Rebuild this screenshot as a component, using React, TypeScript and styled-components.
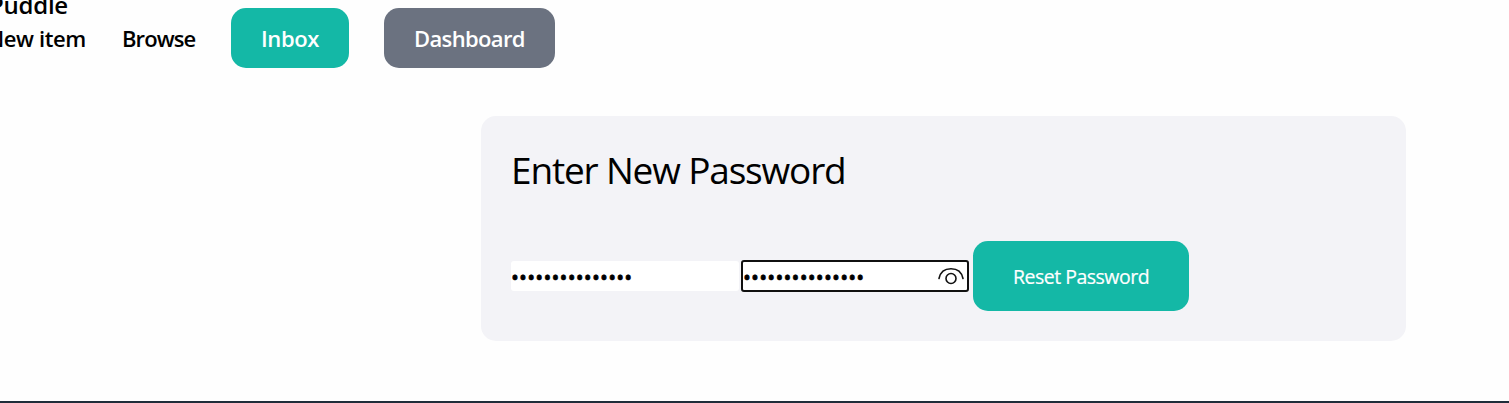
import React from "react";
import styled, { createGlobalStyle } from "styled-components";

const GlobalStyle = createGlobalStyle`
  * { box-sizing: border-box; }
  html, body, #root { margin: 0; height: 100%; }
  body {
    overflow: hidden;
    background: #fefefe;
    color: #000;
    font-family: "Segoe UI", "Open Sans", "Noto Sans", sans-serif;
  }
`;

const Page = styled.div`
  height: 403px;
  display: flex;
  flex-direction: column;
  overflow: hidden;
`;

const Header = styled.header`
  height: 76px;
  flex: none;
  margin-left: -13px;
`;

const Brand = styled.a`
  display: block;
  height: 8px;
  line-height: 30px;
  margin-top: -10px;
  margin-bottom: 10px;
  padding-left: 2px;
  font-size: 24px;
  font-weight: 600;
  letter-spacing: -0.25px;
  white-space: nowrap;
`;

const Nav = styled.nav`
  display: flex;
  align-items: center;
  gap: 35px;
  height: 60px;
  font-size: 22px;
  line-height: 30px;
  white-space: nowrap;
`;

const NavLink = styled.a<{ $width: number; $spacing: number }>`
  width: ${(p) => p.$width}px;
  font-weight: 600;
  letter-spacing: ${(p) => p.$spacing}px;
`;

const NavButton = styled(NavLink)<{ $color: string }>`
  padding: 15px 0 15px 30px;
  border-radius: 15px;
  background: ${(p) => p.$color};
  color: #fff;
`;

const Card = styled.main`
  width: 925px;
  height: 225px;
  flex: none;
  margin: 40px 0 0 481px;
  padding: 30px;
  border-radius: 15px;
  background: #f3f3f7;
`;

const Title = styled.h1`
  margin: -1px 0 46px;
  height: 50px;
  line-height: 50px;
  font-size: 37px;
  font-weight: 400;
  letter-spacing: -1.17px;
  white-space: nowrap;
`;

const Form = styled.form`
  display: flex;
  align-items: center;
  height: 70px;
`;

const Field = styled.label<{ $focused?: boolean }>`
  display: flex;
  align-items: center;
  width: 228px;
  height: ${(p) => (p.$focused ? 32 : 30)}px;
  margin-right: ${(p) => (p.$focused ? 4 : 2)}px;
  padding: 0 ${(p) => (p.$focused ? 2 : 0)}px 0 0;
  border: ${(p) => (p.$focused ? "2px solid #101010" : "0")};
  border-radius: 3px;
  background: #fff;
`;

const PasswordInput = styled.input`
  flex: 1;
  min-width: 0;
  height: 28px;
  padding: 2px 0 0;
  border: 0;
  outline: 0;
  background: transparent;
  color: #000;
  font-family: "Open Sans", sans-serif;
  font-size: 21px;
  letter-spacing: 0.2px;
  -webkit-text-stroke: 0.7px #000;
`;

const SubmitButton = styled.button`
  width: 216px;
  height: 70px;
  padding: 0;
  border: 0;
  border-radius: 15px;
  background: #14b8a6;
  color: #fff;
  font-family: inherit;
  font-size: 19.5px;
  letter-spacing: -0.5px;
  -webkit-text-stroke: 0.2px #fff;
  white-space: nowrap;
`;

const Footer = styled.footer`
  height: 2px;
  margin-top: auto;
  flex: none;
  background: #1f2d3a;
`;

const RevealIcon = () => (
  <svg width="28" height="20" viewBox="0 0 28 20" fill="none" stroke="#111" strokeWidth="1.6">
    <path d="M2 12.5C3.3 6 8 2.700 14 2.700S24.700 6 26 12.500" strokeLinecap="round" />
    <circle cx="14" cy="12.500" r="5" />
  </svg>
);

export default function App() {
  return (
    <>
      <GlobalStyle />
      <Page>
        <Header>
          <Brand>Puddle</Brand>
          <Nav>
            <NavLink $width={100} $spacing={-0.4}>New item</NavLink>
            <NavLink $width={74} $spacing={-0.9}>Browse</NavLink>
            <NavButton $width={118} $spacing={-0.4} $color="#14b8a6">Inbox</NavButton>
            <NavButton $width={171} $spacing={-0.65} $color="#6b7280">Dashboard</NavButton>
          </Nav>
        </Header>
        <Card>
          <Title>Enter New Password</Title>
          <Form onSubmit={(e) => e.preventDefault()}>
            <Field>
              <PasswordInput type="password" aria-label="New password" defaultValue="puddlepassword1" />
            </Field>
            <Field $focused>
              <PasswordInput type="password" aria-label="Confirm password" defaultValue="puddlepassword1" />
              <RevealIcon />
            </Field>
            <SubmitButton type="submit">Reset Password</SubmitButton>
          </Form>
        </Card>
        <Footer />
      </Page>
    </>
  );
}
